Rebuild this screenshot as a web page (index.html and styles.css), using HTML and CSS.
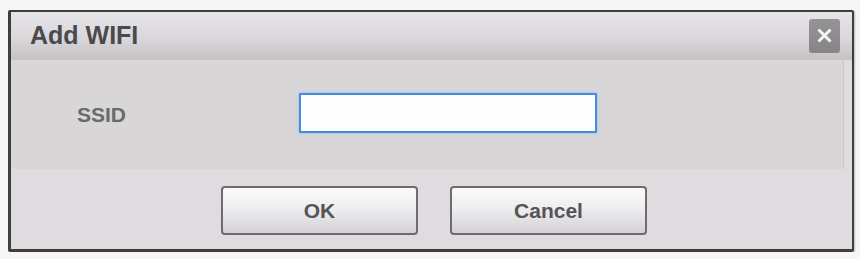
FILE: index.html
```html
<!DOCTYPE html>
<html>
<head>
<meta charset="utf-8">
<link rel="stylesheet" href="styles.css">
</head>
<body>
<div class="page">
  <div class="dialog">
    <div class="titlebar">
      <span class="title">Add WIFI</span>
      <button class="close" aria-label="Close">
        <svg width="15" height="15" viewBox="0 0 15 15"><path d="M2.5 2.5 L12.5 12.5 M12.5 2.5 L2.5 12.5" stroke="#f4f4f4" stroke-width="3" stroke-linecap="square"/></svg>
      </button>
    </div>
    <div class="body">
      <label class="label">SSID</label>
      <input class="field" type="text">
    </div>
    <div class="footer">
      <button class="btn">OK</button>
      <button class="btn">Cancel</button>
    </div>
  </div>
</div>
</body>
</html>
```
FILE: styles.css
```css
html, body {
  margin: 0;
  padding: 0;
  background: #f7f6f7;
}
.page {
  padding: 10px 0 0 8px;
  font-family: "Liberation Sans", Arial, sans-serif;
}
.dialog {
  width: 841px;
  height: 237px;
  border: 2px solid #3e3d40;
  border-left-width: 3px;
  border-bottom-width: 3px;
  border-radius: 2px;
  background: #dfdbdf;
  display: flex;
  flex-direction: column;
  box-shadow: 1px 1px 2px rgba(0,0,0,0.25);
}
.titlebar {
  height: 48px;
  flex: none;
  display: flex;
  align-items: center;
  justify-content: space-between;
  padding: 0 12px 0 19px;
  background: linear-gradient(to bottom, #e8e5e8 0%, #dad7da 55%, #c5c2c5 100%);
}
.title {
  font-size: 25px;
  font-weight: bold;
  color: #4a494c;
  margin-top: -1px;
}
.close {
  width: 31px;
  height: 34px;
  padding: 0;
  border: none;
  border-radius: 3px;
  background: linear-gradient(to bottom, #959395, #868486);
  display: flex;
  align-items: center;
  justify-content: center;
  margin-top: -1px;
}
.body {
  height: 109px;
  flex: none;
  display: flex;
  align-items: center;
  padding-left: 66px;
  margin-right: 8px;
  background: #d9d6d8;
  border-right: 1px solid #cac7ca;
}
.label {
  font-size: 21px;
  font-weight: bold;
  color: #6a696c;
  width: 222px;
}
.field {
  box-sizing: border-box;
  width: 298px;
  height: 40px;
  border: 2px solid #4a8ad6;
  border-radius: 1px;
  background: #fffefe;
  box-shadow: 0 0 2px 1px #a9cdf2;
  margin-top: -3px;
  outline: none;
}
.footer {
  flex: 1;
  display: flex;
  gap: 32px;
  padding: 17px 0 0 210px;
  background: #dfdbdf;
}
.btn {
  box-sizing: border-box;
  width: 197px;
  height: 49px;
  border: 2px solid #6c6b6e;
  border-radius: 4px;
  background: linear-gradient(to bottom, #fbfafb 0%, #eeedef 45%, #d3d1d4 100%);
  font-family: "Liberation Sans", Arial, sans-serif;
  font-size: 21px;
  font-weight: bold;
  color: #555457;
  padding: 0;
}
```
